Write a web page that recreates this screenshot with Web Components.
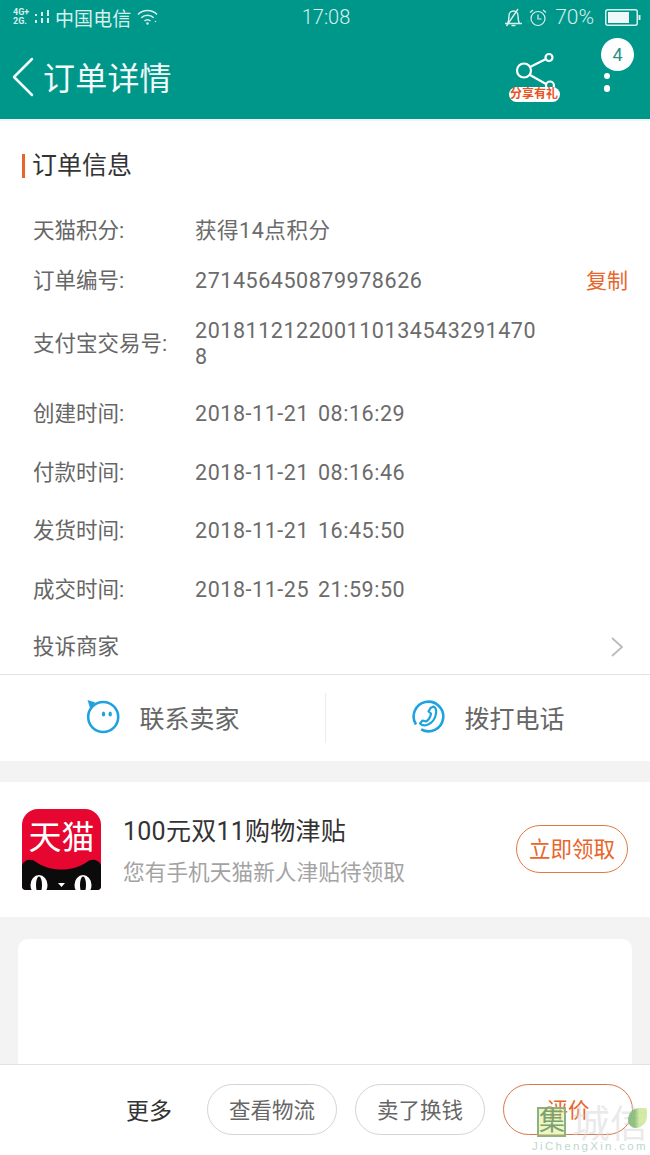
<!DOCTYPE html>
<html lang="zh">
<head>
<meta charset="utf-8">
<title>订单详情</title>
<style>
  html, body {
    margin: 0;
    height: 1155px;
    overflow: hidden;
    background: #f3f3f3;
    font-family: Roboto, "Noto Sans CJK SC", sans-serif;
  }
  body { display: flex; flex-direction: column; position: relative; }
</style>
</head>
<body>
<status-bar></status-bar>
<app-header></app-header>
<info-section title-text="订单信息">
  <info-row label="天猫积分:" value="获得14点积分" style="margin-top:0"></info-row>
  <info-row label="订单编号:" value="271456450879978626" action="复制" style="margin-top:24px"></info-row>
  <info-row label="支付宝交易号:" value="2018112122001101345432914708" style="margin-top:24px"></info-row>
  <info-row label="创建时间:" value="2018-11-21 08:16:29" style="margin-top:31px"></info-row>
  <info-row label="付款时间:" value="2018-11-21 08:16:46" style="margin-top:32.5px"></info-row>
  <info-row label="发货时间:" value="2018-11-21 16:45:50" style="margin-top:32.5px"></info-row>
  <info-row label="成交时间:" value="2018-11-25 21:59:50" style="margin-top:32.5px"></info-row>
  <info-row label="投诉商家" arrow style="margin-top:31.5px"></info-row>
</info-section>
<contact-bar></contact-bar>
<promo-card></promo-card>
<blank-card></blank-card>
<action-bar></action-bar>
<site-watermark></site-watermark>

<script>
class StatusBar extends HTMLElement {
  constructor() {
    super()
    const shadow = this.attachShadow({ mode: 'open' })
    shadow.innerHTML = `
      <style>
        :host {
          display: grid;
          grid-template-columns: 1fr auto 1fr;
          align-items: center;
          height: 34px;
          padding: 0 9px 0 13px;
          background: #00978b;
          color: #d9f0ed;
          font-size: 19px;
        }
        .left, .right { display: flex; align-items: center; }
        .right { justify-content: flex-end; }
        .net { font-size: 9px; line-height: 9px; font-weight: 700; width: 21px; white-space: nowrap; }
        .carrier { margin: 0 6px 0 5px; letter-spacing: .1px; }
        .pct { margin: 0 11px 0 8px; font-size: 21px; font-weight: 300; }
        .time { font-size: 20px; font-weight: 300; margin-left: -2px; }
        svg { display: block; }
      </style>
      <div class="left">
        <div class="net">4G+<br>2G.</div>
        <svg width="16" height="16" viewBox="0 0 16 16" fill="#d9f0ed">
          <rect x="1" y="5" width="2" height="2"/><rect x="1" y="11" width="2" height="3"/>
          <rect x="7" y="3" width="2" height="4"/><rect x="7" y="9" width="2" height="5"/>
          <rect x="13" y="1" width="2" height="6"/><rect x="13" y="9" width="2" height="5"/>
        </svg>
        <span class="carrier">中国电信</span>
        <svg width="21" height="16" viewBox="0 0 21 16" fill="none" stroke="#d9f0ed" stroke-width="1.500">
          <path d="M1 5.500a13.500 13.500 0 0 1 19 0"/><path d="M4.300 8.800a9 9 0 0 1 12.400 0"/>
          <path d="M7.500 12a4.500 4.500 0 0 1 6 0"/>
          <circle cx="10.500" cy="14.500" r="1.200" fill="#d9f0ed" stroke="none"/>
          <circle cx="18.500" cy="12.500" r=".8" fill="#d9f0ed" stroke="none"/>
        </svg>
      </div>
      <div class="time">17:08</div>
      <div class="right">
        <svg width="19" height="19" viewBox="0 0 19 19" fill="none" stroke="#d9f0ed" stroke-width="1.400">
          <path d="M1 15.500h17M3.500 15.500c1.500-2.500 1.500-5 1.500-8a4.500 4.500 0 0 1 9 0c0 3 0 5.500 1.500 8"/>
          <path d="M7.500 17.500h4M2.500 18 14 1"/>
        </svg>
        <svg style="margin-left:6px" width="18" height="19" viewBox="0 0 18 19" fill="none" stroke="#d9f0ed" stroke-width="1.200">
          <circle cx="9" cy="10.500" r="7"/><path d="M9 6.500v4.500h3.500M1 4.500 4 2M17 4.500 14 2"/>
        </svg>
        <span class="pct">70%</span>
        <svg width="36" height="17" viewBox="0 0 36 17">
          <rect x=".75" y=".75" width="31.500" height="15.500" rx="2" fill="none" stroke="#d9f0ed" stroke-width="1.500"/>
          <rect x="3" y="3" width="21" height="11" fill="#eef8f6"/>
          <rect x="33.500" y="6" width="2" height="5" fill="#d9f0ed"/>
        </svg>
      </div>
    `
  }
}

class AppHeader extends HTMLElement {
  constructor() {
    super()
    const shadow = this.attachShadow({ mode: 'open' })
    shadow.innerHTML = `
      <style>
        :host {
          display: flex;
          align-items: center;
          position: relative;
          height: 85px;
          padding: 0 40px 0 12px;
          background: #00978b;
          color: #fff;
          border-bottom: 2px solid #eef6f4;
        }
        .title { font-size: 32px; margin: -2px 0 0 9px; flex: 1; color: #f2fbf9; letter-spacing: .2px; }
        .share { position: relative; width: 52px; height: 58px; margin-right: 43px; margin-top: 2px; }
        .share svg { display: block; }
        .gift {
          position: absolute;
          left: 0;
          top: 38px;
          width: 51px;
          height: 15px;
          border-radius: 8px;
          background: #fff;
          color: #e8531f;
          font-size: 12px;
          font-weight: 700;
          line-height: 15px;
          text-align: center;
        }
        .more { display: flex; flex-direction: column; gap: 6px; margin-top: 11px; }
        .badge {
          position: absolute;
          left: 601px;
          top: 4px;
          width: 33px;
          height: 33px;
          border-radius: 50%;
          background: #fff;
          color: #2c8f88;
          font-size: 18px;
          line-height: 33px;
          text-align: center;
        }
        .dot { width: 6.500px; height: 6.500px; border-radius: 50%; background: #fff; }
      </style>
      <svg width="22" height="40" viewBox="0 0 22 40" fill="none" stroke="#f2fbf9" stroke-width="2.500" stroke-linecap="round" stroke-linejoin="round">
        <path d="M20 2 2 20l18 18"/>
      </svg>
      <div class="title">订单详情</div>
      <div class="share">
        <svg width="52" height="50" viewBox="0 0 52 50" fill="none" stroke="#fff" stroke-width="2.200">
          <circle cx="15" cy="21.500" r="7"/>
          <circle cx="40" cy="8.500" r="3.500"/>
          <circle cx="41" cy="36.500" r="4"/>
          <path d="M21 18 37 10M21 26l16 9"/>
        </svg>
        <div class="gift">分享有礼</div>
      </div>
      <div class="more">
        <div class="dot"></div>
        <div class="dot"></div>
      </div>
      <div class="badge">4</div>
    `
  }
}

class InfoSection extends HTMLElement {
  constructor() {
    super()
    const shadow = this.attachShadow({ mode: 'open' })
    shadow.innerHTML = `
      <style>
        :host { display: block; background: #fff; height: 553px; overflow: hidden; }
        h2 {
          margin: 33px 0 0 22px;
          padding-left: 7px;
          border-left: 3px solid #e8662a;
          font-size: 25px;
          font-weight: 400;
          line-height: 24px;
          color: #333;
        }
        .rows { padding: 40px 22px 0 33px; }
      </style>
      <h2>${this.getAttribute('title-text')}</h2>
      <div class="rows"><slot></slot></div>
    `
  }
}

class InfoRow extends HTMLElement {
  constructor() {
    super()
    const shadow = this.attachShadow({ mode: 'open' })
    const action = this.getAttribute('action')
    const value = this.getAttribute('value')
    shadow.innerHTML = `
      <style>
        :host {
          display: flex;
          align-items: center;
          font-size: 21.500px;
          line-height: 26px;
          color: #666;
        }
        .label { width: 162px; flex: none; }
        .value {
          width: 345px;
          word-break: break-all;
          letter-spacing: .55px;
          word-spacing: 3px;
          font-size: 21.500px;
          color: #6b6b6b;
        }
        .action { margin-left: auto; color: #e8662a; font-size: 21px; }
        svg { margin-left: auto; margin-right: 4px; display: block; }
      </style>
      <div class="label">${this.getAttribute('label')}</div>
      ${value ? `<div class="value">${value}</div>` : ''}
      ${action ? `<div class="action">${action}</div>` : ''}
      ${this.hasAttribute('arrow') ? `<svg width="14" height="22" viewBox="0 0 14 22" fill="none" stroke="#bbb" stroke-width="1.800"><path d="m2 2 10 9-10 9"/></svg>` : ''}
    `
  }
}

class ContactBar extends HTMLElement {
  constructor() {
    super()
    const shadow = this.attachShadow({ mode: 'open' })
    shadow.innerHTML = `
      <style>
        :host {
          display: grid;
          grid-template-columns: 1fr 1fr;
          height: 86px;
          background: #fff;
          border-top: 1px solid #e2e2e2;
          color: #666;
          font-size: 25px;
        }
        .item { display: flex; align-items: center; justify-content: center; gap: 18px; margin-bottom: 2px; }
        .item + .item { position: relative; }
        .item + .item::before {
          content: "";
          position: absolute;
          left: 0;
          top: 18px;
          bottom: 16px;
          border-left: 1px solid #ececec;
        }
        svg { display: block; }
      </style>
      <div class="item">
        <svg width="36" height="36" viewBox="0 0 36 36" fill="none" stroke="#1fa3e0" stroke-width="2.600">
          <circle cx="18.200" cy="18" r="15"/>
          <path d="M2.500 1 10.500 3.500 5 9z" fill="#1fa3e0" stroke="none"/>
          <ellipse cx="18.500" cy="15" rx="1.700" ry="2.500" fill="#1fa3e0" stroke="none"/>
          <ellipse cx="25.200" cy="15" rx="1.700" ry="2.500" fill="#1fa3e0" stroke="none"/>
        </svg>
        <span>联系卖家</span>
      </div>
      <div class="item">
        <svg width="36" height="36" viewBox="0 0 36 36" fill="none" stroke="#1fa3e0" stroke-width="2.600">
          <g transform="translate(.5 0)">
            <path d="M10.700 30.400A14.800 14.800 0 1 0 5.500 25.500"/>
            <path stroke-width="2.200" stroke-linejoin="round" d="M20 9l3-1.500c2 1 3 4 2.500 7-.7 5-4 10-9 11.500-2.500.7-5 .5-7-1.500l2.500-3 3.500 1c2.500-1.500 4.500-5 5-8l-2.500-2z"/>
          </g>
        </svg>
        <span>拨打电话</span>
      </div>
    `
  }
}

class PromoCard extends HTMLElement {
  constructor() {
    super()
    const shadow = this.attachShadow({ mode: 'open' })
    shadow.innerHTML = `
      <style>
        :host {
          display: flex;
          align-items: center;
          height: 135px;
          margin-top: 21px;
          padding: 0 22px;
          background: #fff;
        }
        .logo {
          position: relative;
          flex: none;
          width: 79px;
          height: 81px;
          border-radius: 16px 16px 4px 4px;
          overflow: hidden;
          background: #e6062f;
          color: #fff;
        }
        .logo span {
          position: absolute;
          left: 0;
          right: 0;
          top: 9px;
          font-size: 33px;
          line-height: 40px;
          text-align: center;
          white-space: nowrap;
        }
        .logo svg { position: absolute; left: 0; bottom: 0; display: block; }
        .text { flex: 1; margin-left: 22px; margin-top: 5px; }
        .name { font-size: 25px; line-height: 30px; color: #333; letter-spacing: .25px; }
        .sub { font-size: 21.700px; line-height: 28px; color: #a3a3a3; margin-top: 12px; }
        button {
          all: unset;
          box-sizing: border-box;
          width: 112px;
          height: 48px;
          border: 1px solid #e07a45;
          border-radius: 24px;
          color: #e8662a;
          font-size: 21.500px;
          line-height: 48px;
          text-align: center;
          margin-top: -1px;
        }
      </style>
      <div class="logo">
        <span>天猫</span>
        <svg width="79" height="33" viewBox="0 0 79 33">
          <path d="M0 33V8C2 3 9 1 14 5 28 15 51 15 65 5 70 1 77 3 79 8V33z" fill="#0b0b0b"/>
          <ellipse cx="17" cy="28" rx="8.500" ry="10" fill="#fff"/>
          <ellipse cx="61" cy="28" rx="8.500" ry="10" fill="#fff"/>
          <ellipse cx="17" cy="28" rx="3" ry="8.500" fill="#0b0b0b"/>
          <ellipse cx="61" cy="28" rx="3" ry="8.500" fill="#0b0b0b"/>
          <path d="M36 26h7l-3.500 4z" fill="#fff"/>
        </svg>
      </div>
      <div class="text">
        <div class="name">100元双11购物津贴</div>
        <div class="sub">您有手机天猫新人津贴待领取</div>
      </div>
      <button>立即领取</button>
    `
  }
}

class BlankCard extends HTMLElement {
  constructor() {
    super()
    this.attachShadow({ mode: 'open' }).innerHTML = `
      <style>
        :host {
          display: block;
          flex: 1;
          margin: 22px 18px 0;
          background: #fff;
          border-radius: 10px 10px 0 0;
        }
      </style>
    `
  }
}

class ActionBar extends HTMLElement {
  constructor() {
    super()
    const shadow = this.attachShadow({ mode: 'open' })
    shadow.innerHTML = `
      <style>
        :host {
          display: flex;
          align-items: center;
          justify-content: flex-end;
          gap: 18px;
          box-sizing: border-box;
          height: 91px;
          padding: 0 17px 2px 0;
          background: #fff;
          border-top: 1px solid #e2e2e2;
        }
        .more { font-size: 23px; color: #333; margin-right: 17px; }
        button {
          all: unset;
          box-sizing: border-box;
          width: 130px;
          height: 51px;
          border: 1px solid #d4d4d4;
          border-radius: 26px;
          color: #666;
          font-size: 21.500px;
          line-height: 52px;
          text-align: center;
        }
        button.primary { border-color: #d9774a; color: #e8662a; }
      </style>
      <span class="more">更多</span>
      <button>查看物流</button>
      <button>卖了换钱</button>
      <button class="primary">评价</button>
    `
  }
}

class SiteWatermark extends HTMLElement {
  constructor() {
    super()
    const shadow = this.attachShadow({ mode: 'open' })
    shadow.innerHTML = `
      <style>
        :host {
          position: absolute;
          left: 530px;
          top: 1100px;
          width: 120px;
          height: 55px;
          pointer-events: none;
        }
        .box {
          position: absolute;
          left: 7px;
          top: 7px;
          box-sizing: border-box;
          width: 29px;
          height: 30px;
          border: 2px solid #8db184;
          background: rgba(226, 243, 160, .65);
          color: #7c9f74;
          font-size: 26px;
          line-height: 25px;
          text-align: center;
        }
        .cn {
          position: absolute;
          left: 42px;
          top: 3px;
          font-size: 38px;
          line-height: 42px;
          color: rgba(214, 214, 214, .5);
          white-space: nowrap;
        }
        .leaf {
          position: absolute;
          left: 98px;
          top: 8px;
          width: 19px;
          height: 20px;
          border-radius: 60% 10% 60% 40%;
          background: linear-gradient(90deg, #86bb78, #86bb78 35%, #cfe89e 60%);
          opacity: .9;
        }
        .en {
          position: absolute;
          left: 2px;
          top: 41px;
          font: 11.500px/11px "Liberation Sans", sans-serif;
          letter-spacing: 2.300px;
          color: #bcd8cc;
          white-space: nowrap;
        }
      </style>
      <div class="cn">城信</div>
      <div class="leaf"></div>
      <div class="box">集</div>
      <div class="en">JiChengXin.com</div>
    `
  }
}

customElements.define('status-bar', StatusBar)
customElements.define('app-header', AppHeader)
customElements.define('info-section', InfoSection)
customElements.define('info-row', InfoRow)
customElements.define('contact-bar', ContactBar)
customElements.define('promo-card', PromoCard)
customElements.define('blank-card', BlankCard)
customElements.define('action-bar', ActionBar)
customElements.define('site-watermark', SiteWatermark)
</script>
</body>
</html>
